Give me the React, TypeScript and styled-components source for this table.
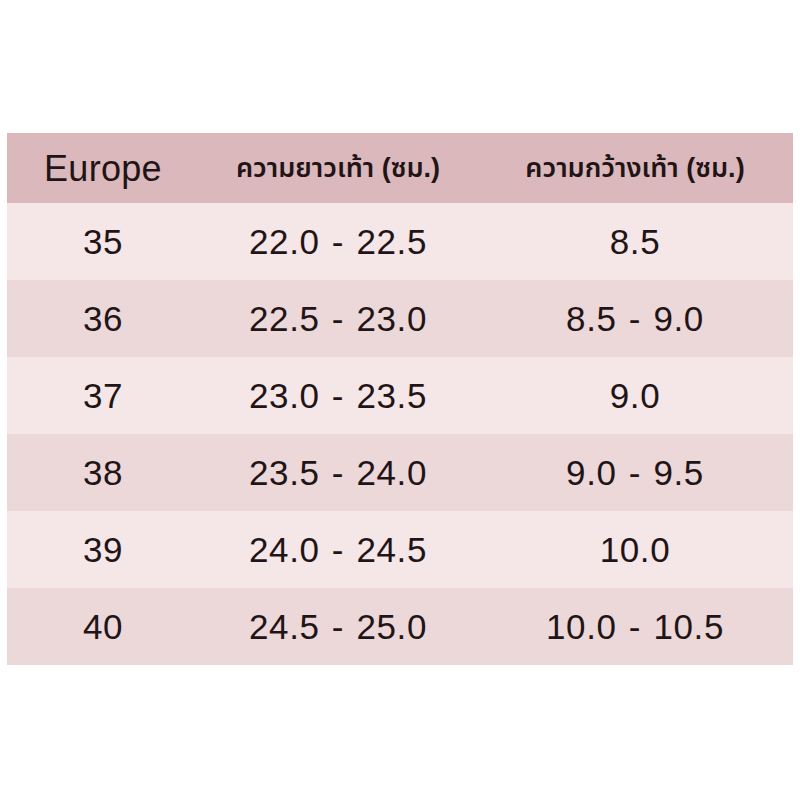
import styled, { createGlobalStyle } from 'styled-components';

const GlobalStyle = createGlobalStyle`
  body {
    margin: 0;
    background: #ffffff;
    font-family: "Liberation Sans", "Noto Sans", "Noto Sans Thai", sans-serif;
  }
`;

const Page = styled.div`
  width: 800px;
  height: 800px;
  padding: 133px 7px 0;
  box-sizing: border-box;
`;

const Table = styled.div`
  display: grid;
  grid-template-columns: 192px 278px 1fr;
  width: 786px;
`;

const HeaderCell = styled.div<{ $big?: boolean }>`
  height: 70px;
  display: flex;
  align-items: center;
  justify-content: center;
  background: #dbb8bc;
  color: #1f1416;
  font-size: ${(p) => (p.$big ? '36px' : '27px')};
  font-weight: ${(p) => (p.$big ? 400 : 600)};
  letter-spacing: ${(p) => (p.$big ? '0.3px' : '0')};
  padding-top: ${(p) => (p.$big ? '2px' : '0')};
  box-sizing: border-box;
`;

const Cell = styled.div<{ $even: boolean }>`
  height: 77px;
  display: flex;
  align-items: center;
  justify-content: center;
  background: ${(p) => (p.$even ? '#ecd7d9' : '#f5e6e7')};
  color: #1f1416;
  font-size: 35px;
  letter-spacing: 0.6px;
  word-spacing: 2px;
`;

const rows: [string, string, string][] = [
  ['35', '22.0 - 22.5', '8.5'],
  ['36', '22.5 - 23.0', '8.5 - 9.0'],
  ['37', '23.0 - 23.5', '9.0'],
  ['38', '23.5 - 24.0', '9.0 - 9.5'],
  ['39', '24.0 - 24.5', '10.0'],
  ['40', '24.5 - 25.0', '10.0 - 10.5'],
];

const App = (): JSX.Element => {
  return (
    <>
      <GlobalStyle />
      <Page>
        <Table>
          <HeaderCell $big>Europe</HeaderCell>
          <HeaderCell>ความยาวเท้า (ซม.)</HeaderCell>
          <HeaderCell>ความกว้างเท้า (ซม.)</HeaderCell>
          {rows.map((row, index) =>
            row.map((value, col) => (
              <Cell key={`${index}-${col}`} $even={index % 2 === 1}>
                {value}
              </Cell>
            ))
          )}
        </Table>
      </Page>
    </>
  );
};

export default App;
